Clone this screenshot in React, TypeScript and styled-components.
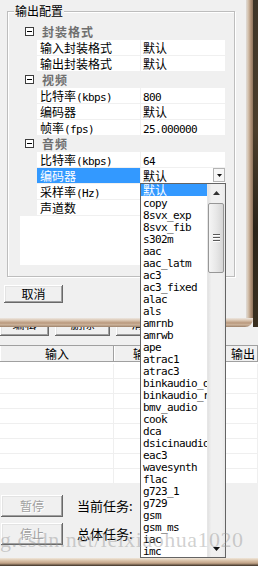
import React from 'react'
import styled, {createGlobalStyle} from 'styled-components'

const CJK = `"Noto Sans CJK SC", "Noto Sans CJK TC", sans-serif`

const GlobalStyle = createGlobalStyle`
	html, body {
		margin: 0;
		padding: 0;
		background: #f0f0f0;
	}
	body {
		font-family: ${CJK};
		font-size: 12px;
		color: #000;
	}
	* {
		box-sizing: border-box;
	}
`

// half-width latin runs, drawn mono so they keep the 6px cell of the original font
const Lat = styled.span`
	font-family: 'DejaVu Sans Mono', 'Liberation Mono', monospace;
	font-size: 11px;
	letter-spacing: -0.62px;
`

const mixed = (s: string) =>
	s
		.split(/([\x20-\x7e]+)/)
		.filter(Boolean)
		.map((p, i) => (/^[\x20-\x7e]+$/.test(p) ? <Lat key={i}>{p}</Lat> : <React.Fragment key={i}>{p}</React.Fragment>))

const categories = [
	{
		title: '封装格式',
		rows: [
			{name: '输入封装格式', value: '默认'},
			{name: '输出封装格式', value: '默认'}
		]
	},
	{
		title: '视频',
		rows: [
			{name: '比特率(kbps)', value: '800'},
			{name: '编码器', value: '默认'},
			{name: '帧率(fps)', value: '25.000000'}
		]
	},
	{
		title: '音频',
		rows: [
			{name: '比特率(kbps)', value: '64'},
			{name: '编码器', value: '默认', selected: true},
			{name: '采样率(Hz)', value: ''},
			{name: '声道数', value: ''}
		]
	}
]

const codecs = [
	'默认', 'copy', '8svx_exp', '8svx_fib', 's302m', 'aac', 'aac_latm', 'ac3', 'ac3_fixed', 'alac', 'als',
	'amrnb', 'amrwb', 'ape', 'atrac1', 'atrac3', 'binkaudio_d', 'binkaudio_r', 'bmv_audio', 'cook', 'dca',
	'dsicinaudio', 'eac3', 'wavesynth', 'flac', 'g723_1', 'g729', 'gsm', 'gsm_ms', 'iac', 'imc'
]

const Arrow = ({dir, w = 7, h = 4}: {dir: 'up' | 'down'; w?: number; h?: number}) => (
	<svg width={w} height={h} viewBox={`0 0 ${w} ${h}`}>
		{dir === 'up' ? <polygon points={`0,${h} ${w},${h} ${w / 2},0`} fill="#333" /> : <polygon points={`0,0 ${w},0 ${w / 2},${h}`} fill="#111" />}
	</svg>
)

const Collapse = () => (
	<svg width="9" height="9" viewBox="0 0 9 9" style={{flexShrink: 0}}>
		<rect x="0.5" y="0.5" width="8" height="8" fill="#fff" stroke="#3c3c3c" />
		<line x1="2" y1="4.5" x2="7" y2="4.5" stroke="#000" />
	</svg>
)

const App = () => {
	return (
		<>
			<GlobalStyle />
			<Screen>
				<TopArea>
					<DialogFrame>
						<DialogBody>
							<GroupBox>
								<Legend>输出配置</Legend>
								<PropGrid>
									{categories.map(cat => (
										<React.Fragment key={cat.title}>
											<CategoryRow>
												<Collapse />
												<CategoryTitle>{cat.title}</CategoryTitle>
											</CategoryRow>
											{cat.rows.map((r, i) => (
												<PropRow key={i}>
													<NameCell $selected={!!r.selected}>{mixed(r.name)}</NameCell>
													<ValueCell>
														<ValueText>{mixed(r.value)}</ValueText>
														{r.selected && (
															<DropButton>
																<Arrow dir="down" w={5} h={3} />
															</DropButton>
														)}
													</ValueCell>
												</PropRow>
											))}
										</React.Fragment>
									))}
								</PropGrid>
							</GroupBox>
							<PushButton $w={59} $h={18}>
								取消
							</PushButton>
						</DialogBody>
					</DialogFrame>
					<BackWindow />
				</TopArea>

				<MainWindow>
					<ButtonStrip>
						<PushButton $w={49} $h={24}>编辑</PushButton>
						<PushButton $w={55} $h={24}>删除</PushButton>
						<PushButton $w={55} $h={24}>清空</PushButton>
					</ButtonStrip>
					<ListHeader>
						<HeaderCell>输入</HeaderCell>
						<HeaderCell>输出格式设置</HeaderCell>
						<HeaderCell $left>输出</HeaderCell>
					</ListHeader>
					<ListBody>
						{Array.from({length: 8}).map((_, i) => (
							<ListRow key={i}>
								<ListCell />
								<ListCell />
								<ListCell />
							</ListRow>
						))}
					</ListBody>
					<Controls>
						<ControlRow>
							<PushButton $w={62} $h={22} disabled>
								暂停
							</PushButton>
							<TaskLabel>当前任务:</TaskLabel>
						</ControlRow>
						<ControlRow>
							<PushButton $w={62} $h={22} disabled>
								停止
							</PushButton>
							<TaskLabel>总体任务:</TaskLabel>
						</ControlRow>
					</Controls>
					<BottomFrame />
				</MainWindow>

				<DropList>
					<Items>
						{codecs.map((c, i) => (
							<Item key={c} $selected={i === 0}>
								{mixed(c)}
							</Item>
						))}
					</Items>
					<ScrollBar>
						<ScrollArrow>
							<Arrow dir="up" />
						</ScrollArrow>
						<Thumb>
							<Grip />
							<Grip />
							<Grip />
						</Thumb>
						<Track />
						<ScrollArrow>
							<Arrow dir="down" />
						</ScrollArrow>
					</ScrollBar>
				</DropList>

				<Watermark>g.csdn.net/leixiaohua1020</Watermark>
			</Screen>
		</>
	)
}

const Screen = styled.div`
	position: relative;
	width: 258px;
	height: 566px;
	overflow: hidden;
	background: #f0f0f0;
	display: flex;
	flex-direction: column;
`

const TopArea = styled.div`
	display: flex;
	height: 327px;
	flex-shrink: 0;
`

const DialogFrame = styled.div`
	width: 253px;
	display: flex;
	padding: 0 7px 9px 0;
	border-bottom-right-radius: 8px;
	background: linear-gradient(to bottom, #ece6e0 0%, #dcc8b4 25%, #b9987c 55%, #cdb49c 75%, #9c8068 100%) left bottom / 100% 9px no-repeat,
		linear-gradient(to right, #dedbd8 0%, #d6c4b0 30%, #b4967c 65%, #8e735c 100%) right top / 7px 100% no-repeat;
`

const DialogBody = styled.div`
	flex: 1;
	display: flex;
	flex-direction: column;
	align-items: flex-start;
	background: #f0f0f0;
	border-bottom-right-radius: 3px;
`

const BackWindow = styled.div`
	flex: 1;
	background: linear-gradient(to bottom, #3e3528, #4b3d2b 40%, #2b2419 70%, #3a3020);
`

const GroupBox = styled.div`
	margin: 11px 0 0 7px;
	width: 228px;
	height: 266px;
	border: 1px solid #bdbdbd;
	box-shadow: 1px 1px 0 #fff, inset 1px 1px 0 #fff;
	display: flex;
	flex-direction: column;
	align-items: flex-start;
`

const Legend = styled.div`
	margin: -7px 0 0 6px;
	padding: 0 1px;
	line-height: 12px;
	background: #f0f0f0;
`

const PropGrid = styled.div`
	margin: 7px 0 0 12px;
	width: 205px;
	height: 241px;
	background: #fff;
	display: flex;
	flex-direction: column;
`

const CategoryRow = styled.div`
	display: flex;
	align-items: center;
	height: 16px;
	padding: 0 0 1px 5px;
	background: #f0f0f0;
`

const CategoryTitle = styled.span`
	margin-left: 8px;
	font-weight: 700;
	font-size: 12px;
	letter-spacing: 1px;
	line-height: 15px;
	color: #6f6f6f;
`

const PropRow = styled.div`
	display: flex;
	gap: 1px;
	height: 16px;
	padding: 0 0 1px 17px;
	background: #f0f0f0;
`

const NameCell = styled.div<{$selected: boolean}>`
	width: 103px;
	padding-left: 3px;
	line-height: 15px;
	white-space: nowrap;
	overflow: hidden;
	background: ${p => (p.$selected ? '#3399ff' : '#fff')};
	color: ${p => (p.$selected ? '#fff' : '#000')};
`

const ValueCell = styled.div`
	flex: 1;
	display: flex;
	background: #fff;
`

const ValueText = styled.div`
	flex: 1;
	padding-left: 2px;
	line-height: 15px;
	white-space: nowrap;
`

const DropButton = styled.div`
	width: 12px;
	height: 14px;
	display: flex;
	align-items: center;
	justify-content: center;
	border: 1px solid #b4b4b4;
	background: #f7f7f7;
`

const PushButton = styled.button<{$w: number; $h: number}>`
	flex-shrink: 0;
	width: ${p => p.$w}px;
	height: ${p => p.$h}px;
	padding: 0;
	border: none;
	background: #f0f0f0;
	font-family: ${CJK};
	font-size: 12px;
	line-height: 12px;
	color: #000;
	box-shadow: inset -1px -1px 0 #696969, inset 1px 1px 0 #fff, inset -2px -2px 0 #a0a0a0, inset 2px 2px 0 #e3e3e3;

	&:disabled {
		color: #a0a0a0;
		text-shadow: 1px 1px 0 #fff;
	}

	${DialogBody} > & {
		margin: 8px 0 0 4px;
	}
`

const MainWindow = styled.div`
	flex: 1;
	display: flex;
	flex-direction: column;
	background: #f0f0f0;
`

const ButtonStrip = styled.div`
	height: 9px;
	margin-bottom: 9px;
	display: flex;
	align-items: flex-end;
	gap: 6px;
	overflow: hidden;
`

const ListHeader = styled.div`
	display: grid;
	grid-template-columns: 114px 110px 1fr;
	height: 17px;
	border-top: 1px solid #a0a0a0;
	background: #f0f0f0;
`

const HeaderCell = styled.div<{$left?: boolean}>`
	line-height: 15px;
	text-align: ${p => (p.$left ? 'left' : 'center')};
	padding-left: ${p => (p.$left ? '7px' : '0')};
	white-space: nowrap;
	overflow: hidden;
	box-shadow: inset -1px -1px 0 #a0a0a0, inset 1px 0 0 #fff;
`

const ListBody = styled.div`
	height: 121px;
	padding-top: 2px;
	background: #fff;
	overflow: hidden;
`

const ListRow = styled.div`
	display: grid;
	grid-template-columns: 114px 110px 1fr;
	height: 15px;
	border-bottom: 1px solid #efefef;
`

const ListCell = styled.div`
	border-right: 1px solid #efefef;
`

const Controls = styled.div`
	height: 75px;
	padding: 12px 0 0 1px;
	display: flex;
	flex-direction: column;
	gap: 6px;
`

const ControlRow = styled.div`
	display: flex;
	align-items: center;
	gap: 14px;
`

const TaskLabel = styled.span`
	font-size: 13px;
	line-height: 22px;
	white-space: nowrap;
`

const BottomFrame = styled.div`
	height: 8px;
	background: linear-gradient(to bottom, #f0e6da 0%, #d8c0a6 35%, #c0a286 65%, #3a3026 100%);
`

const DropList = styled.div`
	position: absolute;
	left: 140px;
	top: 183px;
	width: 86px;
	height: 375px;
	z-index: 2;
	display: flex;
	background: #fff;
	border: 1px solid #646464;
`

const Items = styled.div`
	width: 66px;
	overflow: hidden;
`

const Item = styled.div<{$selected: boolean}>`
	height: 12px;
	line-height: 12px;
	padding-left: 2px;
	white-space: nowrap;
	background: ${p => (p.$selected ? '#3399ff' : 'transparent')};
	color: ${p => (p.$selected ? '#fff' : '#000')};
`

const ScrollBar = styled.div`
	flex: 1;
	display: flex;
	flex-direction: column;
	background: linear-gradient(to right, #e2e2e2, #f0f0f0 20%, #f0f0f0 80%, #e8e8e8);
	border-left: 1px solid #e6e6e6;
`

const ScrollArrow = styled.div`
	height: 17px;
	display: flex;
	align-items: center;
	justify-content: center;
`

const Thumb = styled.div`
	margin: 2px 1px 0 0;
	height: 70px;
	display: flex;
	flex-direction: column;
	align-items: center;
	justify-content: center;
	gap: 1px;
	border: 1px solid #979797;
	border-radius: 2px;
	background: linear-gradient(to right, #f5f5f5, #e8e8e8 50%, #d6d6d6);
`

const Grip = styled.div`
	width: 7px;
	height: 2px;
	border-top: 1px solid #5a5a5a;
	border-bottom: 1px solid #fff;
`

const Track = styled.div`
	flex: 1;
`

const Watermark = styled.div`
	position: absolute;
	left: 0;
	top: 529px;
	z-index: 3;
	font-family: 'Liberation Serif', serif;
	font-size: 22px;
	line-height: 22px;
	letter-spacing: 0.5px;
	white-space: nowrap;
	color: rgba(150, 150, 150, 0.45);
	pointer-events: none;
`

export default App
